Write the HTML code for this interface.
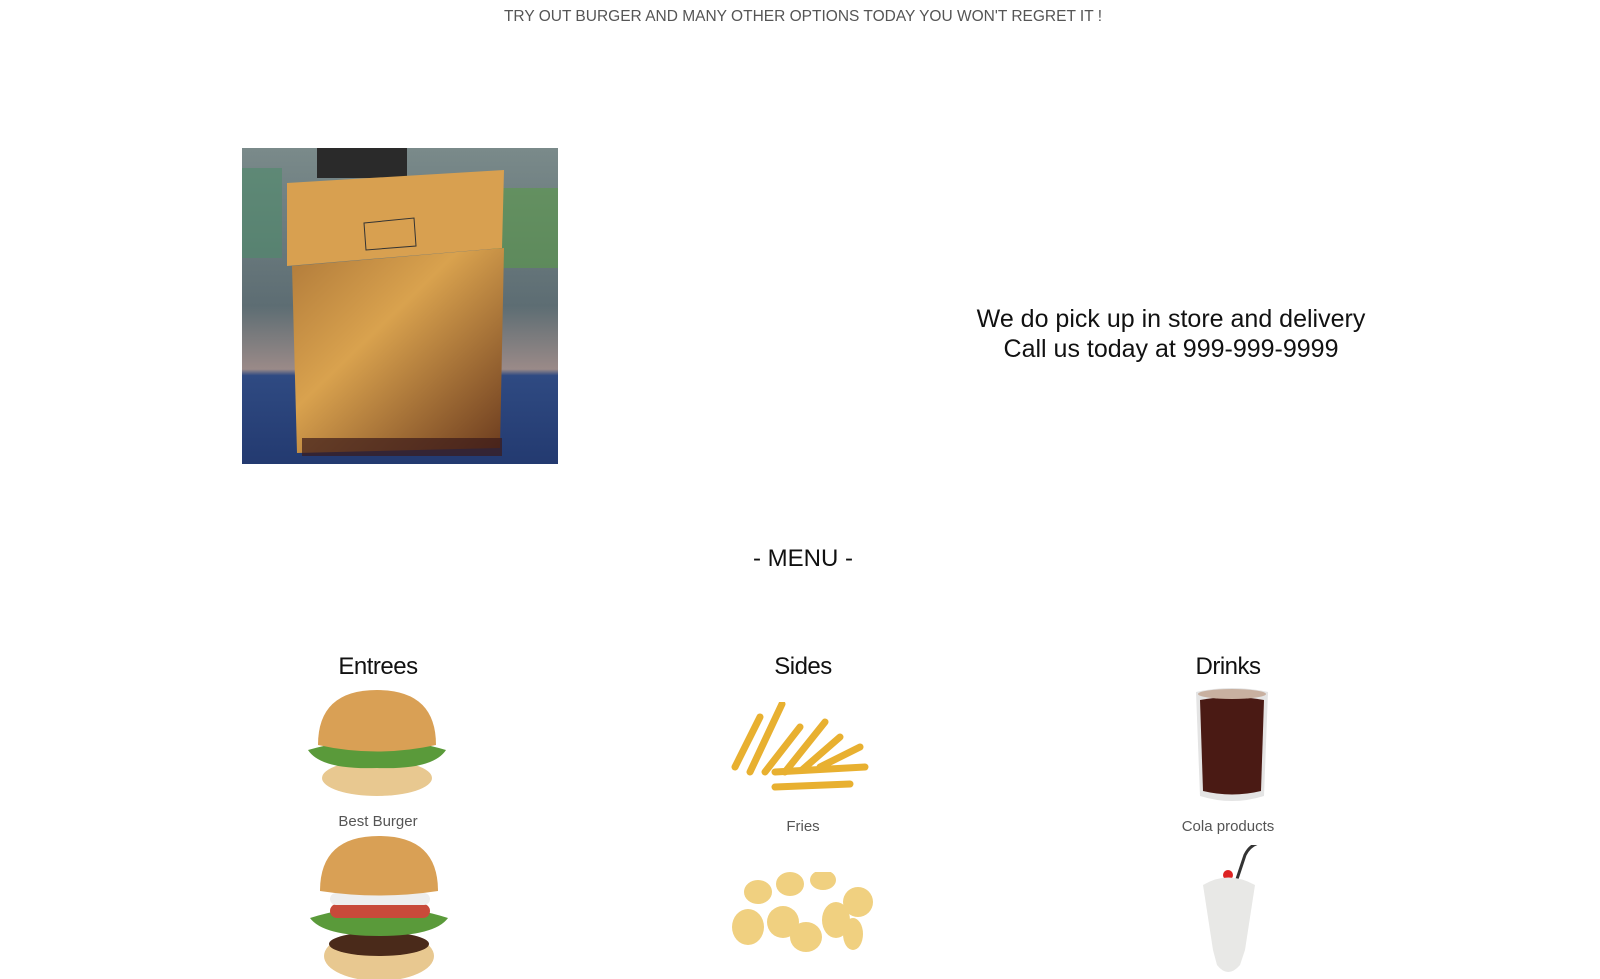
<!DOCTYPE html>
<html><head><meta charset="utf-8"><style>
body{margin:0;width:1600px;height:979px;overflow:hidden;background:#fff;font-family:"Liberation Sans",sans-serif;position:relative}
.t{position:absolute;white-space:nowrap;transform:translateX(-50%)}
.a{position:absolute}
</style></head><body>
<div class="t" style="left:803px;top:8px;font-size:15.5px;color:#555;letter-spacing:0px">TRY OUT BURGER AND MANY OTHER OPTIONS TODAY YOU WON'T REGRET IT !</div>

<svg class="a" style="left:242px;top:148px" width="316" height="316" viewBox="0 0 316 316">
<defs><linearGradient id="bg" x1="0" y1="0" x2="0" y2="1"><stop offset="0" stop-color="#7a8a8a"/><stop offset=".5" stop-color="#5d6d73"/><stop offset=".7" stop-color="#9a8a88"/><stop offset=".72" stop-color="#2f4a82"/><stop offset="1" stop-color="#233a70"/></linearGradient>
<linearGradient id="bag" x1="0" y1="0" x2="1" y2="1"><stop offset="0" stop-color="#b07a3a"/><stop offset=".4" stop-color="#d9a24e"/><stop offset="1" stop-color="#6a3a1e"/></linearGradient></defs>
<rect width="316" height="316" fill="url(#bg)"/>
<rect x="0" y="20" width="40" height="90" fill="#4f8a6a" opacity=".6"/>
<rect x="250" y="40" width="66" height="80" fill="#5a9a4a" opacity=".6"/>
<rect x="75" y="0" width="90" height="30" fill="#2a2a2a"/>
<path d="M45 35 L262 22 L260 100 L45 118 Z" fill="#d8a050"/>
<path d="M50 118 L262 100 L258 300 L55 305 Z" fill="url(#bag)"/>
<rect x="60" y="290" width="200" height="18" fill="#3a1a1a" opacity=".7"/>
<path d="M122 75 L172 70 L174 98 L124 102 Z" fill="none" stroke="#333"/>
</svg>

<div class="t" style="left:1171px;top:304px;font-size:25px;color:#111;text-align:center;line-height:30px;letter-spacing:0px">We do pick up in store and delivery<br>Call us today at 999-999-9999</div>

<div class="t" style="left:803px;top:545px;font-size:24px;color:#111">- MENU -</div>

<div class="t" style="left:378px;top:653px;font-size:24px;color:#111;letter-spacing:-0.5px">Entrees</div>
<div class="t" style="left:803px;top:653px;font-size:24px;color:#111;letter-spacing:-0.5px">Sides</div>
<div class="t" style="left:1228px;top:653px;font-size:24px;color:#111;letter-spacing:-0.5px">Drinks</div>

<svg class="a" style="left:303px;top:690px" width="148" height="108" viewBox="0 0 148 108">
<ellipse cx="74" cy="88" rx="55" ry="18" fill="#e8c890"/>
<path d="M5 60 Q74 40 143 60 Q130 80 74 78 Q18 80 5 60Z" fill="#5a9a3a"/>
<path d="M15 55 Q15 0 74 0 Q133 0 133 55 Q74 68 15 55Z" fill="#d9a055"/>
</svg>
<div class="t" style="left:378px;top:813px;font-size:15px;color:#555">Best Burger</div>
<svg class="a" style="left:305px;top:836px" width="148" height="143" viewBox="0 0 148 143">
<ellipse cx="74" cy="120" rx="55" ry="25" fill="#e8c890"/>
<ellipse cx="74" cy="108" rx="50" ry="12" fill="#4a2a1a"/>
<path d="M5 82 Q74 60 143 82 Q130 100 74 100 Q18 100 5 82Z" fill="#5a9a3a"/>
<rect x="25" y="68" width="100" height="14" rx="7" fill="#c84a3a"/>
<rect x="25" y="57" width="100" height="12" rx="6" fill="#eee"/>
<path d="M15 55 Q15 0 74 0 Q133 0 133 55 Q74 64 15 55Z" fill="#d9a055"/>
</svg>

<svg class="a" style="left:730px;top:702px" width="142" height="92" viewBox="0 0 142 92">
<g stroke="#e8b030" stroke-width="7" stroke-linecap="round">
<line x1="5" y1="65" x2="30" y2="15"/><line x1="20" y1="70" x2="52" y2="2"/><line x1="35" y1="70" x2="70" y2="25"/><line x1="55" y1="70" x2="95" y2="20"/><line x1="72" y1="68" x2="110" y2="35"/><line x1="90" y1="65" x2="130" y2="45"/><line x1="45" y1="70" x2="135" y2="65"/><line x1="45" y1="85" x2="120" y2="82"/></g>
</svg>
<div class="t" style="left:803px;top:818px;font-size:15px;color:#555">Fries</div>
<svg class="a" style="left:728px;top:872px" width="152" height="82" viewBox="0 0 152 82">
<g fill="#f0d080"><ellipse cx="30" cy="20" rx="14" ry="12"/><ellipse cx="62" cy="12" rx="14" ry="12"/><ellipse cx="95" cy="8" rx="13" ry="10"/><ellipse cx="130" cy="30" rx="15" ry="15"/><ellipse cx="20" cy="55" rx="16" ry="18"/><ellipse cx="55" cy="50" rx="16" ry="16"/><ellipse cx="78" cy="65" rx="16" ry="15"/><ellipse cx="108" cy="48" rx="14" ry="18"/><ellipse cx="125" cy="62" rx="10" ry="16"/></g>
</svg>

<svg class="a" style="left:1194px;top:686px" width="76" height="126" viewBox="0 0 76 126">
<path d="M2 6 Q38 -2 74 6 L70 110 Q38 120 6 110Z" fill="#e4e4e4"/>
<path d="M6 14 Q38 8 70 14 L67 105 Q38 112 9 105Z" fill="#4a1a14"/>
<ellipse cx="38" cy="8" rx="34" ry="5" fill="#c8b0a0"/>
</svg>
<div class="t" style="left:1228px;top:818px;font-size:15px;color:#555">Cola products</div>
<svg class="a" style="left:1195px;top:845px" width="76" height="134" viewBox="0 0 76 134">
<path d="M40 40 L50 10 Q55 0 64 -2" stroke="#333" stroke-width="3" fill="none"/>
<circle cx="33" cy="30" r="5" fill="#d22"/>
<path d="M8 40 Q33 25 60 40 L50 105 L45 120 Q33 134 22 120 L18 105Z" fill="#e8e8e6"/>
</svg>
</body></html>
